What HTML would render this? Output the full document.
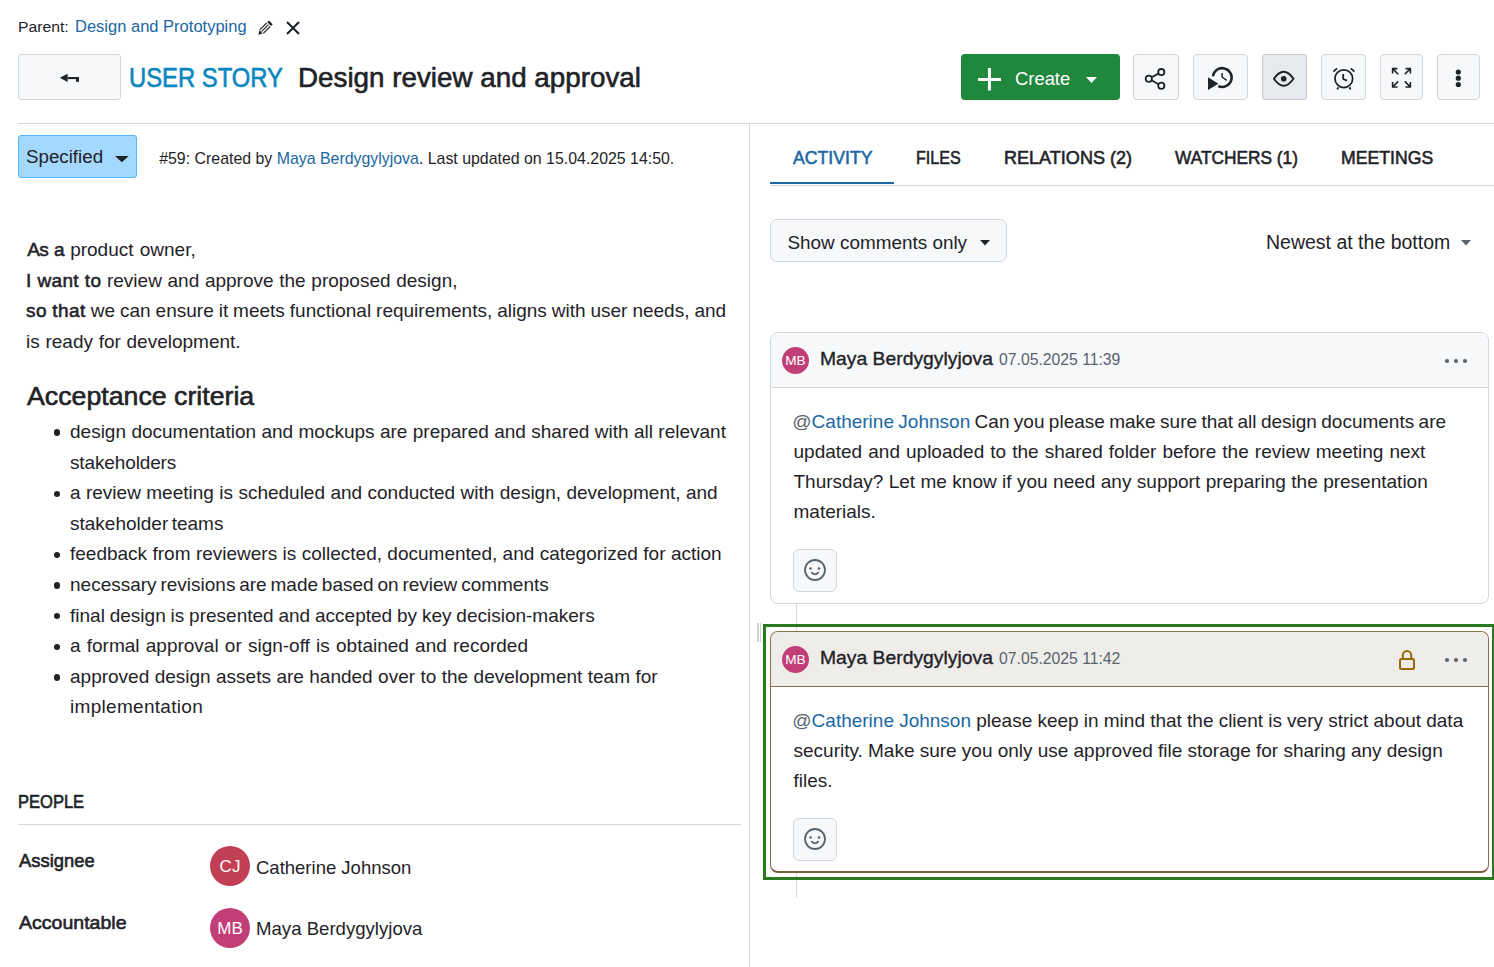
<!DOCTYPE html>
<html><head><meta charset="utf-8">
<style>
*{box-sizing:border-box;margin:0;padding:0}
html,body{width:1494px;height:967px;overflow:hidden;background:#fff}
body{position:relative;font-family:"Liberation Sans",sans-serif;color:#1f2328}
.a{position:absolute}
.t{position:absolute;white-space:nowrap;line-height:1}
.lnk{color:#1a67a3}
.sb{-webkit-text-stroke:0.55px #1f2328}
.btn{position:absolute;background:#f6f8fa;border:1px solid #d0d7de;border-radius:6px}
svg{position:absolute;overflow:visible}
</style></head><body>
<div class="t" style="left:18.06px;top:19.13px;font-size:15.2px;transform:scaleX(1.0362);transform-origin:0 0;color:#1f2328;;">Parent:</div>
<div class="t" style="left:75.15px;top:18.93px;font-size:15.8px;transform:scaleX(1.0451);transform-origin:0 0;color:#1a67a3;;">Design and Prototyping</div>
<svg style="left:258px;top:20px" width="15" height="15" viewBox="0 0 15 15"><g fill="#1f2328"><path d="M9.2 2.3 L10.9 0.6 L14.7 4.3 L13 6 Z"/><path d="M0.3 14.7 L1.4 10.3 L4.7 13.6 Z"/></g><g stroke="#1f2328" stroke-width="1.15"><path d="M1.7 9.9 L8.6 3"/><path d="M3.5 11.6 L10.4 4.7"/><path d="M5.3 13.4 L12.2 6.5"/></g></svg>
<svg style="left:286px;top:21px" width="14" height="14" viewBox="0 0 14 14"><path d="M1 1 L13 13 M13 1 L1 13" stroke="#1f2328" stroke-width="2.1"/></svg>
<div class="btn" style="left:18px;top:54px;width:103px;height:46px;border-radius:3px"></div>
<svg style="left:59px;top:73px" width="22" height="10" viewBox="0 0 22 10"><path d="M0.8 4.8 L8.6 0.8 L8.6 9 Z" fill="#1f2328"/><rect x="8.6" y="4" width="11.4" height="2.1" fill="#1f2328"/><rect x="17" y="4" width="3" height="4.8" fill="#1f2328"/></svg>
<div class="t" style="left:128.62px;top:65.11px;font-size:26.8px;transform:scaleX(0.8889);transform-origin:0 0;color:#0887c0;-webkit-text-stroke:0.6px #0887c0;">USER STORY</div>
<div class="t" style="left:297.94px;top:64.94px;font-size:27.0px;transform:scaleX(1.0294);transform-origin:0 0;color:#1f2328;-webkit-text-stroke:0.6px #1f2328;">Design review and approval</div>
<div class="a" style="left:961px;top:54px;width:159px;height:46px;background:#1f883d;border-radius:4px"></div>
<svg style="left:978px;top:66px" width="24" height="25" viewBox="0 0 24 25"><path d="M11.45 2.1 V24.6 M0.1 13.55 H23" stroke="#fff" stroke-width="3"/></svg>
<div class="t" style="left:1014.69px;top:69.99px;font-size:18.2px;transform:scaleX(1.0113);transform-origin:0 0;color:#fff;;">Create</div>
<svg style="left:1086px;top:76.5px" width="11" height="6" viewBox="0 0 11 6"><path d="M0 0 H11 L5.5 6 Z" fill="#fff"/></svg>
<div class="btn" style="left:1133px;top:54px;width:46px;height:46px;border-radius:4px"></div>
<svg style="left:1133px;top:54px" width="46" height="46" viewBox="0 0 46 46"><g fill="none" stroke="#1f2328" stroke-width="1.8"><circle cx="15.8" cy="24.8" r="3.1"/><circle cx="28.3" cy="18.1" r="3.1"/><circle cx="28.3" cy="31.7" r="3.1"/><path d="M18.6 23.3 L25.5 19.6 M18.6 26.3 L25.5 30.2"/></g></svg>
<div class="btn" style="left:1193px;top:54px;width:55px;height:46px;border-radius:4px"></div>
<svg style="left:1193px;top:54px" width="55" height="46" viewBox="0 0 55 46"><g fill="none" stroke="#1f2328"><path d="M19.94 22.24 A9.4 9.4 0 1 1 25.28 32.07" stroke-width="2.5"/><path d="M29.1 19 V23 L33.6 26.4" stroke-width="1.5"/></g><path d="M15 23.3 L25.4 29.8 L15 35.9 Z" fill="#1f2328"/></svg>
<div class="btn" style="left:1262px;top:54px;width:45px;height:46px;border-radius:4px;background:#e6e9ed;border-color:#c6c8cb;border-radius:3px"></div>
<svg style="left:1262px;top:54px" width="45" height="46" viewBox="0 0 45 46"><path d="M11.9 24.7 Q21.7 10.7 31.5 24.7 Q21.7 38.7 11.9 24.7 Z" fill="none" stroke="#1f2328" stroke-width="1.9" stroke-linejoin="round"/><circle cx="21.7" cy="24.7" r="2.8" fill="#1f2328"/></svg>
<div class="btn" style="left:1321px;top:54px;width:45px;height:46px;border-radius:4px"></div>
<svg style="left:1321px;top:54px" width="45" height="46" viewBox="0 0 45 46"><g fill="none" stroke="#1f2328" stroke-width="1.8"><circle cx="22.8" cy="24.7" r="8.85"/><path d="M22.2 20 V25 L26 26.6"/><path d="M12.4 17.6 L16 14.4 M33.4 17.6 L29.8 14.4 M17.4 33.2 L16.2 35.4 M28.4 33.2 L29.6 35.4"/></g></svg>
<div class="btn" style="left:1380px;top:54px;width:43px;height:46px;border-radius:4px"></div>
<svg style="left:1380px;top:54px" width="43" height="46" viewBox="0 0 43 46"><g fill="none" stroke="#1f2328" stroke-width="1.6"><path d="M12.6 14.6 V19.6 M12 14.6 H17.5 M12.6 14.6 L18.2 20.2"/><path d="M30.4 14.6 V19.6 M31 14.6 H25.5 M30.4 14.6 L24.8 20.2"/><path d="M12.6 33 V28 M12 33 H17.5 M12.6 33 L18.2 27.4"/><path d="M30.4 33 V28 M31 33 H25.5 M30.4 33 L24.8 27.4"/></g></svg>
<div class="btn" style="left:1437px;top:54px;width:43px;height:46px;border-radius:4px"></div>
<svg style="left:1437px;top:54px" width="43" height="46" viewBox="0 0 43 46"><g fill="#1f2328"><circle cx="21.3" cy="18" r="2.6"/><circle cx="21.3" cy="24.2" r="2.6"/><circle cx="21.3" cy="30.5" r="2.6"/></g></svg>
<div class="a" style="left:18px;top:123px;width:1476px;height:1px;background:#d1d9e0"></div>
<div class="a" style="left:749px;top:123px;width:1px;height:844px;background:#d1d9e0"></div>
<div class="a" style="left:18px;top:135px;width:119px;height:43px;background:#a5d8ff;border:1px solid #58b6ff;border-radius:3px"></div>
<div class="t" style="left:26.0px;top:148.39px;font-size:18.8px;transform:scaleX(0.9973);transform-origin:0 0;color:#1f2328;;">Specified</div>
<svg style="left:115.3px;top:156px" width="13.7" height="6.2" viewBox="0 0 13.7 6.2"><path d="M0 0 H13.7 L6.85 6.2 Z" fill="#1f2328"/></svg>
<div class="t" style="left:159.2px;top:150.84px;font-size:15.9px;">#59: Created by <span class="lnk">Maya Berdygylyjova</span>. Last updated on 15.04.2025 14:50.</div>
<div class="t" style="left:27.2px;top:240.12px;font-size:19px;word-spacing:0.918px;"><span class="sb" style="letter-spacing:-0.55px">As a</span> product owner,</div>
<div class="t" style="left:26.0px;top:270.62px;font-size:19px;word-spacing:0.389px;"><span class="sb" style="letter-spacing:0.3px">I want to</span> review and approve the proposed design,</div>
<div class="t" style="left:26.0px;top:301.12px;font-size:19px;word-spacing:-0.334px;"><span class="sb" style="letter-spacing:0.45px">so that</span> we can ensure it meets functional requirements, aligns with user needs, and</div>
<div class="t" style="left:26.0px;top:331.62px;font-size:19px;word-spacing:0.424px;">is ready for development.</div>
<div class="t" style="left:27.0px;top:382.65px;font-size:26.4px;transform:scaleX(1.0124);transform-origin:0 0;color:#1f2328;-webkit-text-stroke:0.6px #1f2328;">Acceptance criteria</div>
<div class="t" style="left:70.0px;top:421.92px;font-size:19px;word-spacing:0.110px;">design documentation and mockups are prepared and shared with all relevant</div>
<div class="t" style="left:70.0px;top:452.52px;font-size:19px;word-spacing:-0.150px;"><span style="letter-spacing:-0.13px">stakeholders</span></div>
<div class="t" style="left:70.0px;top:483.12px;font-size:19px;word-spacing:0.120px;">a review meeting is scheduled and conducted with design, development, and</div>
<div class="t" style="left:70.0px;top:513.72px;font-size:19px;word-spacing:-1.850px;">stakeholder teams</div>
<div class="t" style="left:70.0px;top:544.32px;font-size:19px;word-spacing:0.115px;">feedback from reviewers is collected, documented, and categorized for action</div>
<div class="t" style="left:70.0px;top:574.92px;font-size:19px;word-spacing:-1.454px;">necessary revisions are made based on review comments</div>
<div class="t" style="left:70.0px;top:605.52px;font-size:19px;word-spacing:-0.430px;">final design is presented and accepted by key decision-makers</div>
<div class="t" style="left:70.0px;top:636.12px;font-size:19px;word-spacing:0.920px;">a formal approval or sign-off is obtained and recorded</div>
<div class="t" style="left:70.0px;top:666.72px;font-size:19px;word-spacing:0.140px;">approved design assets are handed over to the development team for</div>
<div class="t" style="left:70.0px;top:697.32px;font-size:19px;"><span style="letter-spacing:0.3px">implementation</span></div>
<div class="a" style="left:53.6px;top:429.40px;width:6.4px;height:6.4px;border-radius:50%;background:#1f2328"></div>
<div class="a" style="left:53.6px;top:490.60px;width:6.4px;height:6.4px;border-radius:50%;background:#1f2328"></div>
<div class="a" style="left:53.6px;top:551.80px;width:6.4px;height:6.4px;border-radius:50%;background:#1f2328"></div>
<div class="a" style="left:53.6px;top:582.40px;width:6.4px;height:6.4px;border-radius:50%;background:#1f2328"></div>
<div class="a" style="left:53.6px;top:613.00px;width:6.4px;height:6.4px;border-radius:50%;background:#1f2328"></div>
<div class="a" style="left:53.6px;top:643.60px;width:6.4px;height:6.4px;border-radius:50%;background:#1f2328"></div>
<div class="a" style="left:53.6px;top:674.20px;width:6.4px;height:6.4px;border-radius:50%;background:#1f2328"></div>
<div class="t" style="left:18.16px;top:794.4px;font-size:17.6px;transform:scaleX(0.9391);transform-origin:0 0;color:#1f2328;-webkit-text-stroke:0.6px #1f2328;">PEOPLE</div>
<div class="a" style="left:18px;top:824px;width:723px;height:1px;background:#d1d9e0"></div>
<div class="t" style="left:19.1px;top:850.95px;font-size:19.2px;transform:scaleX(0.9582);transform-origin:0 0;color:#1f2328;-webkit-text-stroke:0.6px #1f2328;">Assignee</div>
<div class="t" style="left:19.1px;top:912.85px;font-size:19.2px;transform:scaleX(1.0181);transform-origin:0 0;color:#1f2328;-webkit-text-stroke:0.6px #1f2328;">Accountable</div>
<div class="a" style="left:210px;top:846px;width:40px;height:40px;border-radius:50%;background:#c23f55"></div>
<div class="t" style="left:210px;top:857.61px;font-size:17px;width:40px;text-align:center;color:#fff;">CJ</div>
<div class="t" style="left:256px;top:858.64px;font-size:18.5px;">Catherine Johnson</div>
<div class="a" style="left:210px;top:908px;width:40px;height:40px;border-radius:50%;background:#c23e77"></div>
<div class="t" style="left:210px;top:919.61px;font-size:17px;width:40px;text-align:center;color:#fff;">MB</div>
<div class="t" style="left:256px;top:920.36px;font-size:18.6px;">Maya Berdygylyjova</div>
<div class="t" style="left:792.7px;top:150.1px;font-size:17.6px;transform:scaleX(1.0038);transform-origin:0 0;color:#1a67a3;-webkit-text-stroke:0.55px #1a67a3;">ACTIVITY</div>
<div class="t" style="left:915.59px;top:150.1px;font-size:17.6px;transform:scaleX(0.9146);transform-origin:0 0;color:#1f2328;-webkit-text-stroke:0.55px #1f2328;">FILES</div>
<div class="t" style="left:1003.97px;top:150.1px;font-size:17.6px;transform:scaleX(1.026);transform-origin:0 0;color:#1f2328;-webkit-text-stroke:0.55px #1f2328;">RELATIONS (2)</div>
<div class="t" style="left:1175.0px;top:150.1px;font-size:17.6px;transform:scaleX(0.9824);transform-origin:0 0;color:#1f2328;-webkit-text-stroke:0.55px #1f2328;">WATCHERS (1)</div>
<div class="t" style="left:1340.7px;top:150.1px;font-size:17.6px;transform:scaleX(1.0033);transform-origin:0 0;color:#1f2328;-webkit-text-stroke:0.55px #1f2328;">MEETINGS</div>
<div class="a" style="left:770px;top:182px;width:124px;height:2px;background:#1a67a3"></div>
<div class="a" style="left:770px;top:185px;width:724px;height:1px;background:#d1d9e0"></div>
<div class="btn" style="left:770px;top:219px;width:237px;height:43px;border-radius:7px"></div>
<div class="t" style="left:787.5px;top:233.70px;font-size:18.9px;">Show comments only</div>
<svg style="left:980px;top:239.5px" width="10" height="5.5" viewBox="0 0 10 5.5"><path d="M0 0 H10 L5 5.5 Z" fill="#1f2328"/></svg>
<div class="t" style="left:1266px;top:233.19px;font-size:19.5px;">Newest at the bottom</div>
<svg style="left:1461px;top:239.5px" width="10" height="5.5" viewBox="0 0 10 5.5"><path d="M0 0 H10 L5 5.5 Z" fill="#59636e"/></svg>
<div class="a" style="left:796px;top:603px;width:1px;height:295px;background:#d1d9e0"></div>
<div class="a" style="left:770px;top:332px;width:719px;height:272px;border:1px solid #d0d7de;border-radius:8px;background:#fff;overflow:hidden"><div class="a" style="left:0;top:0;width:717px;height:55px;background:#f6f8fa;border-bottom:1px solid #d0d7de"></div></div>
<div class="a" style="left:781.8px;top:346.8px;width:27.2px;height:27.2px;border-radius:50%;background:#c23e77"></div>
<div class="t" style="left:781.8px;top:354.39px;font-size:13.6px;width:27.2px;text-align:center;color:#fff;">MB</div>
<div class="t" style="left:820.04px;top:349.69px;font-size:18.2px;transform:scaleX(1.0623);transform-origin:0 0;color:#1f2328;-webkit-text-stroke:0.35px #1f2328;">Maya Berdygylyjova</div>
<div class="t" style="left:998.82px;top:351.76px;font-size:16.0px;transform:scaleX(0.9836);transform-origin:0 0;color:#59636e;;">07.05.2025 11:39</div>
<svg style="left:1444px;top:358px" width="24" height="6" viewBox="0 0 24 6"><g fill="#59636e"><circle cx="3" cy="3" r="2.1"/><circle cx="12" cy="3" r="2.1"/><circle cx="21" cy="3" r="2.1"/></g></svg>
<div class="t" style="left:792.3px;top:412.12px;font-size:19px;word-spacing:-0.893px;"><span style="color:#59636e">@</span><span class="lnk">Catherine Johnson</span> Can you please make sure that all design documents are</div>
<div class="t" style="left:793.5px;top:442.12px;font-size:19px;word-spacing:0.784px;">updated and uploaded to the shared folder before the review meeting next</div>
<div class="t" style="left:793.5px;top:472.12px;font-size:19px;word-spacing:0.142px;">Thursday? Let me know if you need any support preparing the presentation</div>
<div class="t" style="left:793.5px;top:502.12px;font-size:19px;">materials.</div>
<div class="btn" style="left:793px;top:549px;width:44px;height:43px"></div>
<svg style="left:793px;top:549px" width="44" height="43" viewBox="0 0 44 43"><g fill="none" stroke="#59636e" stroke-width="1.8"><circle cx="22" cy="21" r="10"/><path d="M18.8 23.6 Q22 27 25.2 23.6" stroke-linecap="round"/></g><circle cx="17.6" cy="19.5" r="1.35" fill="#59636e"/><circle cx="26" cy="19.5" r="1.35" fill="#59636e"/></svg>
<div class="a" style="left:763px;top:624px;width:732px;height:256px;border:3px solid #2b7a1f"></div>
<div class="a" style="left:770px;top:631px;width:719px;height:242px;border:1px solid #8d6f48;border-bottom:2px solid #7a5c38;border-radius:8px;background:#fff;overflow:hidden"><div class="a" style="left:0;top:0;width:717px;height:55px;background:#efede9;border-bottom:1px solid #8d6f48"></div></div>
<div class="a" style="left:757px;top:623px;width:1.5px;height:19px;background:#d0d0d0"></div>
<div class="a" style="left:759.5px;top:623px;width:1.5px;height:19px;background:#d0d0d0"></div>
<div class="a" style="left:781.8px;top:645.8px;width:27.2px;height:27.2px;border-radius:50%;background:#c23e77"></div>
<div class="t" style="left:781.8px;top:653.39px;font-size:13.6px;width:27.2px;text-align:center;color:#fff;">MB</div>
<div class="t" style="left:820.04px;top:349.69px;font-size:18.2px;transform:scaleX(1.0623);transform-origin:0 0;color:#1f2328;-webkit-text-stroke:0.35px #1f2328;margin-top:299px;">Maya Berdygylyjova</div>
<div class="t" style="left:998.82px;top:650.76px;font-size:16.0px;transform:scaleX(0.9836);transform-origin:0 0;color:#59636e;;">07.05.2025 11:42</div>
<svg style="left:1399px;top:650.4px" width="16" height="20" viewBox="0 0 16 20"><g fill="none" stroke="#9a6700" stroke-width="2"><path d="M3.8 9 V5.2 A4.2 4.2 0 0 1 12.2 5.2 V9"/><rect x="1" y="9" width="14" height="10" rx="1.5"/></g></svg>
<svg style="left:1444px;top:657px" width="24" height="6" viewBox="0 0 24 6"><g fill="#59636e"><circle cx="3" cy="3" r="2.1"/><circle cx="12" cy="3" r="2.1"/><circle cx="21" cy="3" r="2.1"/></g></svg>
<div class="t" style="left:792.3px;top:711.12px;font-size:19px;word-spacing:-0.084px;"><span style="color:#59636e">@</span><span class="lnk">Catherine Johnson</span> please keep in mind that the client is very strict about data</div>
<div class="t" style="left:793.5px;top:741.12px;font-size:19px;word-spacing:-0.083px;">security. Make sure you only use approved file storage for sharing any design</div>
<div class="t" style="left:793.5px;top:771.12px;font-size:19px;">files.</div>
<div class="btn" style="left:793px;top:818px;width:44px;height:43px"></div>
<svg style="left:793px;top:818px" width="44" height="43" viewBox="0 0 44 43"><g fill="none" stroke="#59636e" stroke-width="1.8"><circle cx="22" cy="21" r="10"/><path d="M18.8 23.6 Q22 27 25.2 23.6" stroke-linecap="round"/></g><circle cx="17.6" cy="19.5" r="1.35" fill="#59636e"/><circle cx="26" cy="19.5" r="1.35" fill="#59636e"/></svg>
<div class="a" style="left:796px;top:880px;width:1px;height:18px;background:#d1d9e0"></div>
</body></html>
